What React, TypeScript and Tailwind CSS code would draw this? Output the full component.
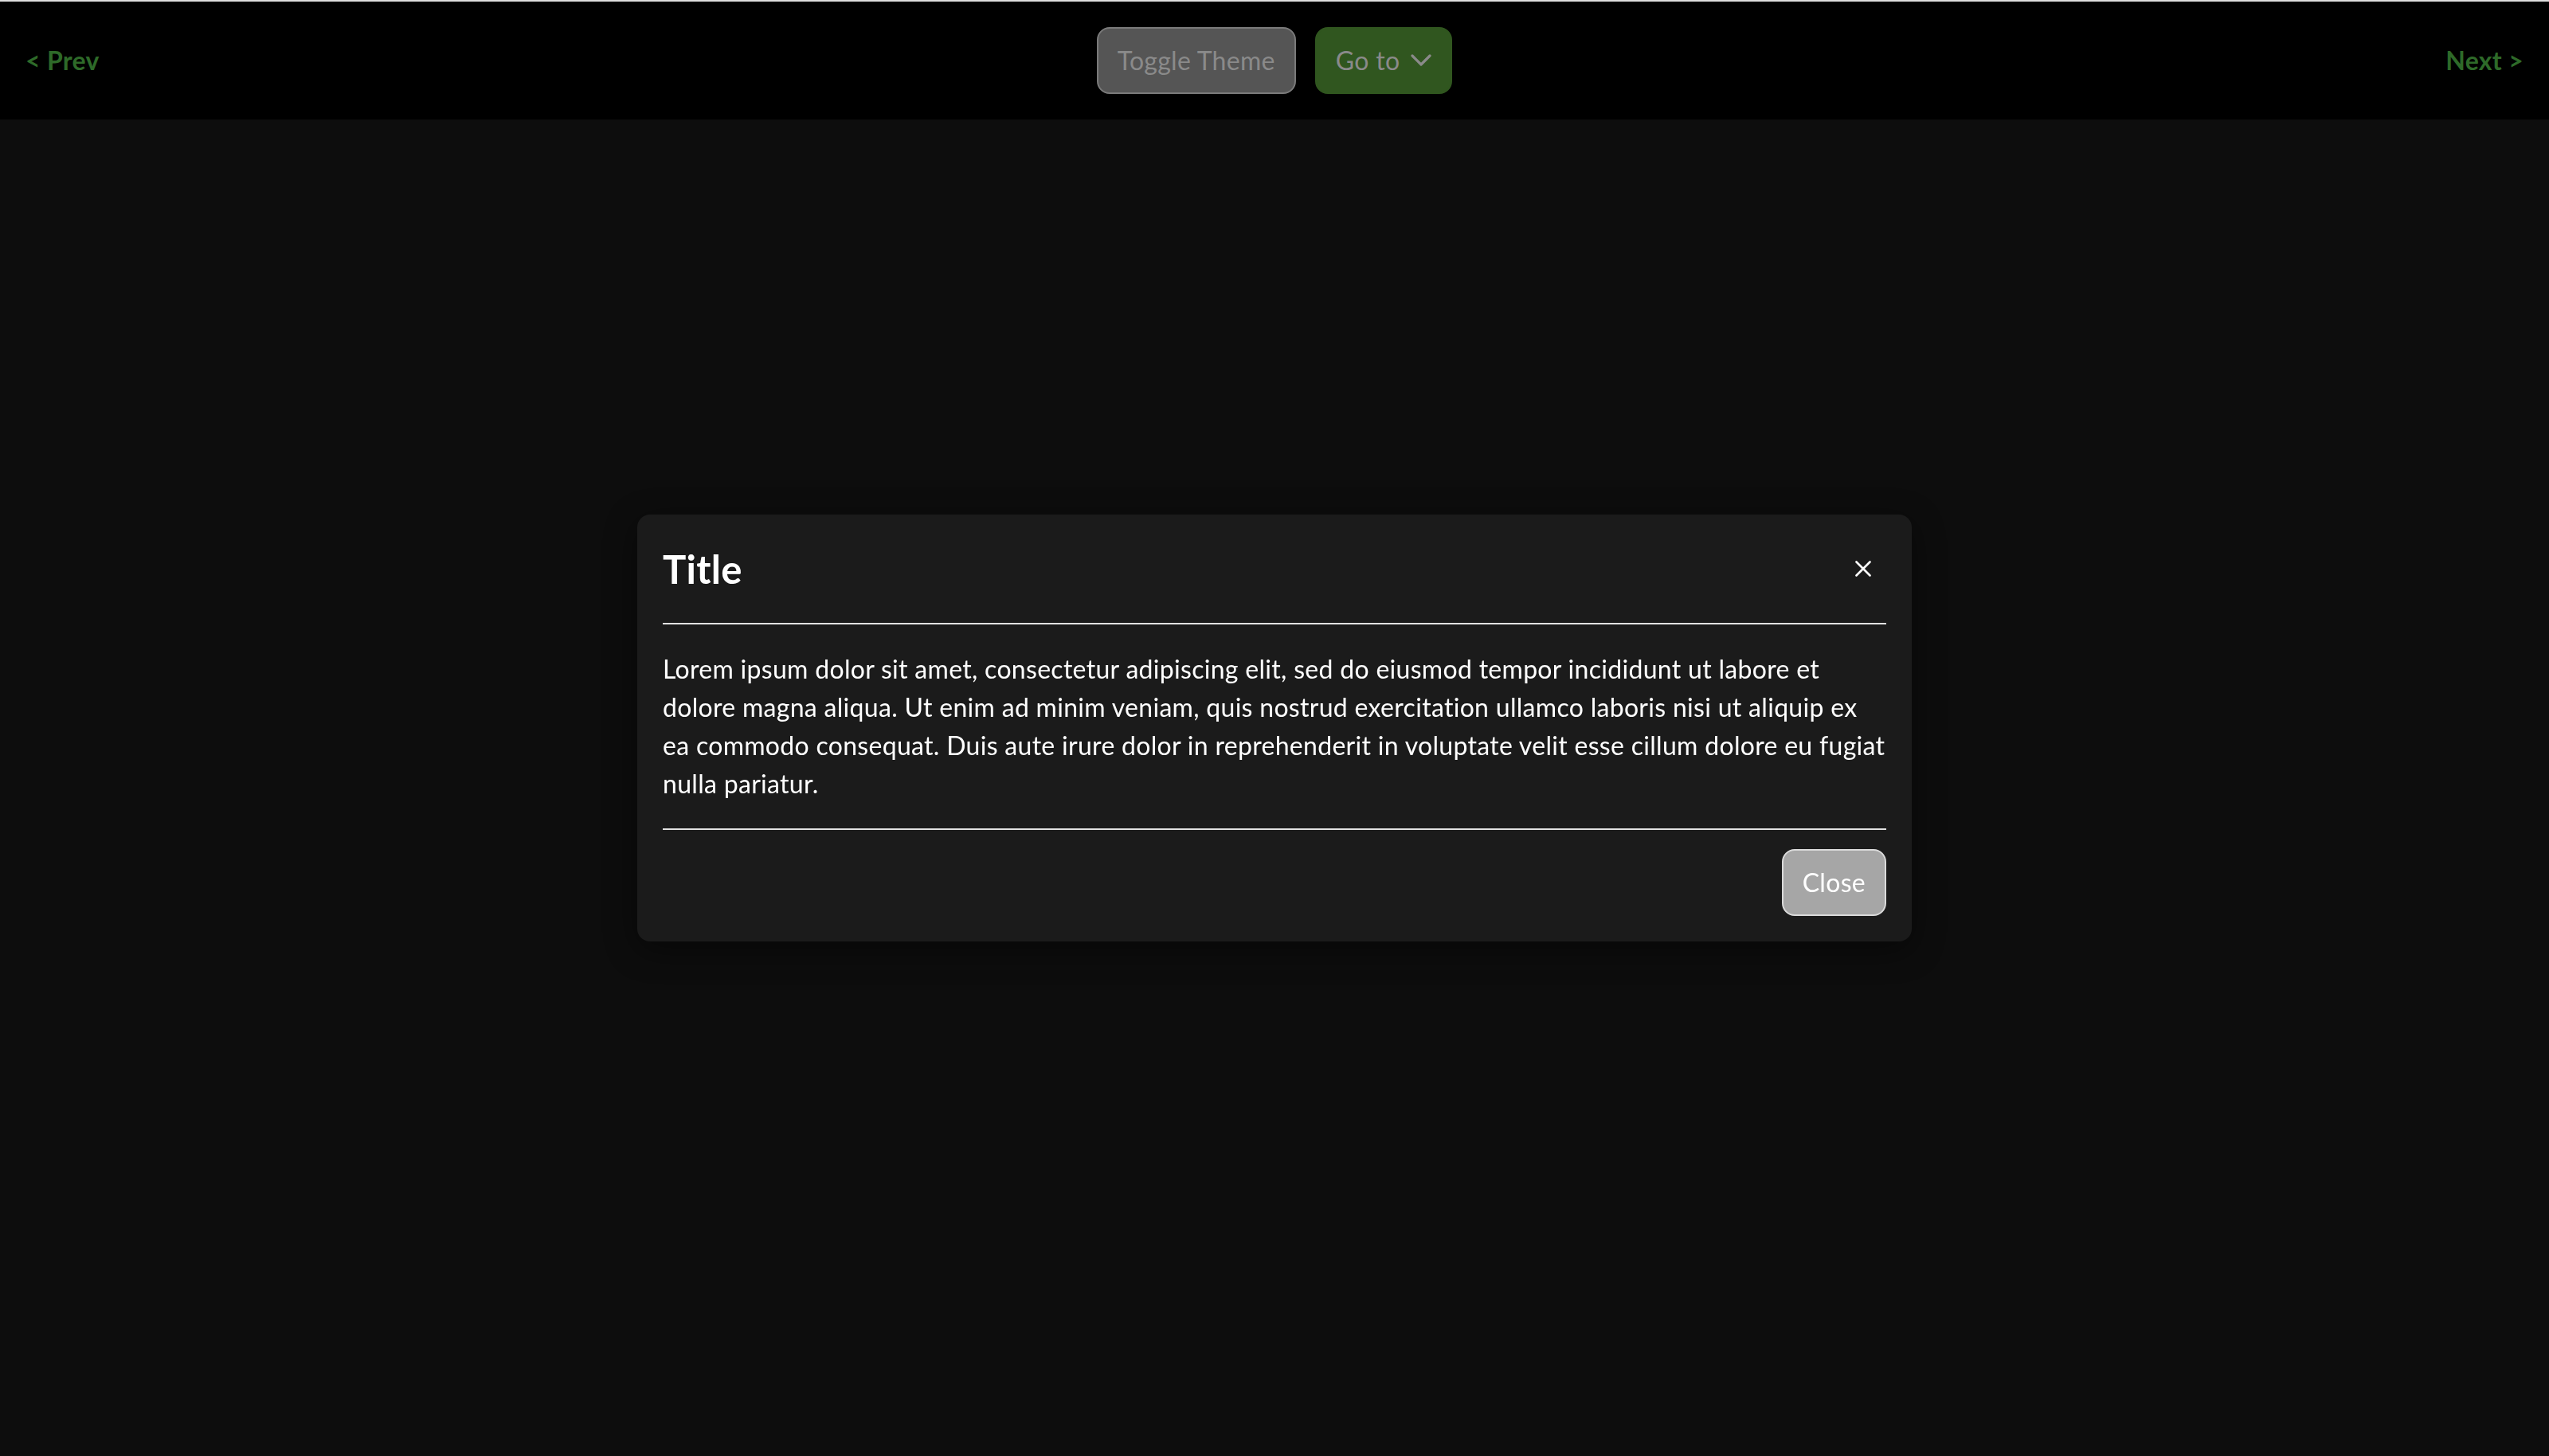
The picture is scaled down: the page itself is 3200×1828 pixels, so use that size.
const LINES = [
  "Lorem ipsum dolor sit amet, consectetur adipiscing elit, sed do eiusmod tempor incididunt ut labore et",
  "dolore magna aliqua. Ut enim ad minim veniam, quis nostrud exercitation ullamco laboris nisi ut aliquip ex",
  "ea commodo consequat. Duis aute irure dolor in reprehenderit in voluptate velit esse cillum dolore eu fugiat",
  "nulla pariatur.",
];

const ChevronDown = () => (
  <svg width="26" height="16" viewBox="0 0 26 16" fill="none" className="ml-[14px]">
    <polyline
      points="2,2 13,13 24,2"
      stroke="#8a8a8a"
      strokeWidth="3.2"
      strokeLinecap="round"
      strokeLinejoin="round"
    />
  </svg>
);

const CloseIcon = () => (
  <svg width="20" height="20" viewBox="0 0 20 20" fill="none">
    <path d="M1.5 1.5 18.5 18.5 M18.5 1.5 1.5 18.5" stroke="#ffffff" strokeWidth="2.6" strokeLinecap="round" />
  </svg>
);

const NavBar = () => {
  return (
    <header className="flex h-[150px] items-center justify-between border-t-2 border-[#dedede] bg-black px-8">
      <a className="w-[200px] text-[32px] font-bold leading-[48px] text-[#2e6a29]">&lt; Prev</a>
      <div className="flex flex-row gap-6">
        <button className="rounded-2xl border-2 border-[#7a7a7a] bg-[#555555] px-6 py-4 text-[32px] leading-[48px] text-[#8a8a8a]">
          Toggle Theme
        </button>
        <button className="flex items-center rounded-2xl border-2 border-[#30561f] bg-[#30561f] px-6 py-4 text-[32px] leading-[48px] text-[#8a8a8a]">
          Go to
          <ChevronDown />
        </button>
      </div>
      <a className="w-[200px] text-right text-[32px] font-bold leading-[48px] text-[#2e6a29]">Next &gt;</a>
    </header>
  );
};

const Modal = () => {
  return (
    <div className="fixed inset-0 flex items-center justify-center">
      <div className="w-[1600px] rounded-2xl bg-[#1b1b1b] px-8 text-white shadow-[0_10px_40px_rgba(0,0,0,0.45)]">
        <div className="flex flex-row items-start justify-between border-b-2 border-[#e2e2e2] py-8">
          <h2 className="text-[49px] font-bold leading-[72px]">Title</h2>
          <button className="mr-[19px] mt-[26px]">
            <CloseIcon />
          </button>
        </div>
        <p className="py-8 text-[32px] leading-[48px]">
          {LINES.map((line, i) => (
            <span key={i}>
              {line}
              {i < LINES.length - 1 && <br />}
            </span>
          ))}
        </p>
        <div className="flex justify-end border-t-2 border-[#e2e2e2] pb-8 pt-6">
          <button className="rounded-2xl border-2 border-[#dadada] bg-[#a6a6a6] px-6 py-4 text-[32px] leading-[48px] text-white">
            Close
          </button>
        </div>
      </div>
    </div>
  );
};

export default function App() {
  return (
    <div className="min-h-screen bg-[#0d0d0d] font-['Lato',sans-serif] tracking-[0.3px]">
      <NavBar />
      <Modal />
    </div>
  );
}
